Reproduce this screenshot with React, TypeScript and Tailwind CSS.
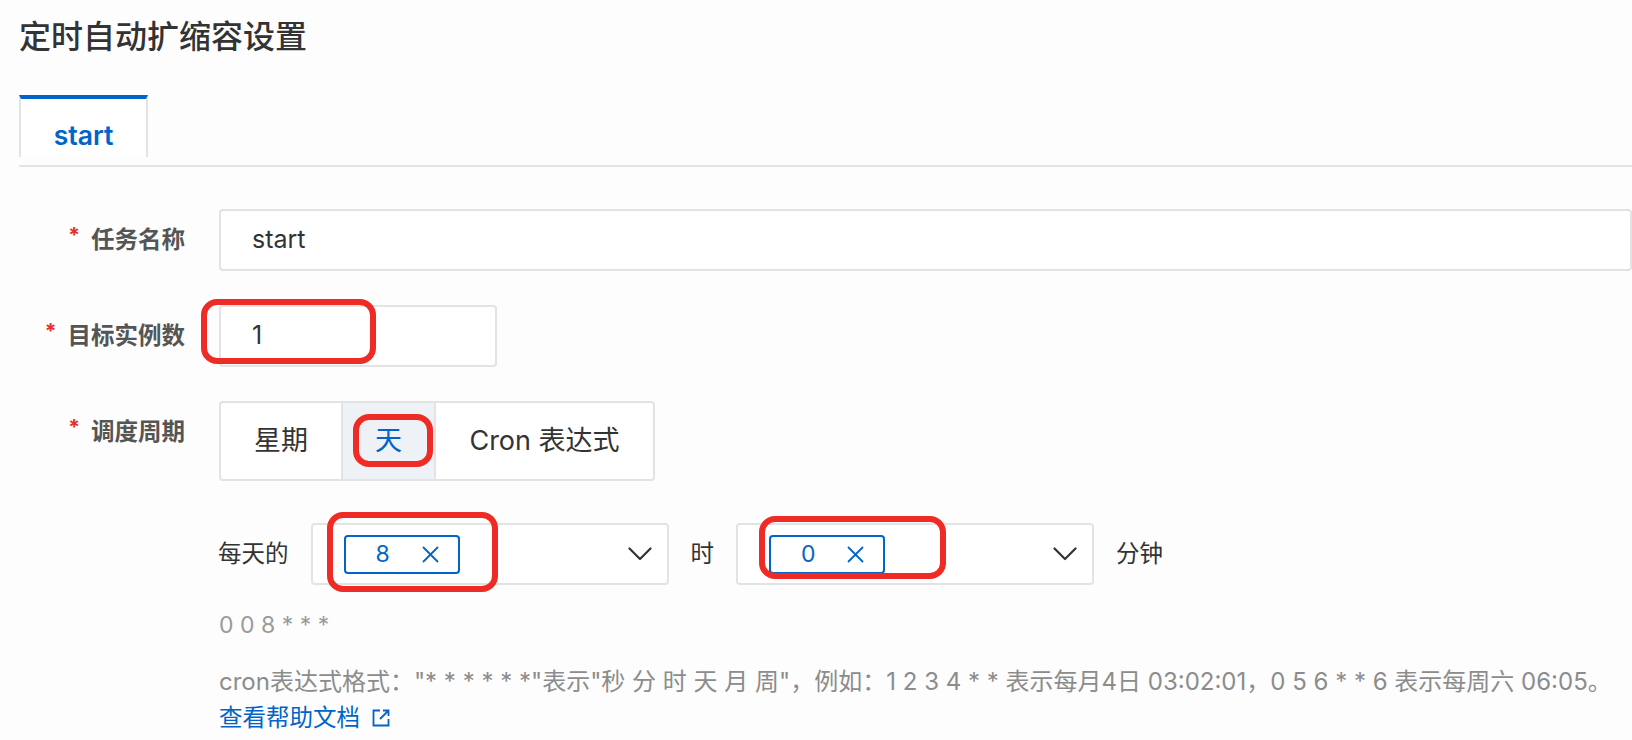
import React from "react";

const FONT = '"Inter", "Noto Sans CJK SC", sans-serif';

const HELP =
  'cron表达式格式："* * * * * *"表示"秒 分 时 天 月 周"，例如：1 2 3 4 * * 表示每月4日 03:02:01，0 5 6 * * 6 表示每周六 06:05。';

function Mark({ className }: { className: string }) {
  // red annotation box drawn over the screenshot
  return (
    <span
      className={`pointer-events-none absolute rounded-[16px] border-[6px] border-[#ee2b24] ${className}`}
    />
  );
}

function Label({ text }: { text: string }) {
  return (
    <div className="flex h-[62px] w-[166px] shrink-0 items-center justify-end text-[23.5px] font-semibold text-[#555]">
      <span className="mr-[11px] -mt-[8px] text-[21px] font-bold text-[#e62e2e]">*</span>
      {text}
    </div>
  );
}

function Chevron() {
  return (
    <svg width="24" height="14" viewBox="0 0 24 14" fill="none">
      <path d="M1.5 1.5L12 12L22.5 1.5" stroke="#333" strokeWidth="2.2" strokeLinecap="round" strokeLinejoin="round" />
    </svg>
  );
}

function Tag({ value }: { value: string }) {
  return (
    <span className="flex h-[39px] w-[116px] items-center rounded-[4px] border-2 border-[#0064c8] pl-[30px] text-[23px] text-[#0064c8]">
      <span className="w-[14px]">{value}</span>
      <svg className="ml-[32px]" width="17" height="17" viewBox="0 0 17 17" fill="none">
        <path d="M1.5 1.5L15.5 15.5M15.5 1.5L1.5 15.5" stroke="#0064c8" strokeWidth="1.8" strokeLinecap="round" />
      </svg>
    </span>
  );
}

function Select({ value, mark }: { value: string; mark: string }) {
  return (
    <div className="relative flex h-[62px] w-[358px] items-center justify-between rounded-[4px] border-2 border-[#e3e3e3] bg-white pl-[31px] pr-[15px]">
      <Tag value={value} />
      <Chevron />
      <Mark className={mark} />
    </div>
  );
}

export default function App() {
  return (
    <div className="h-[740px] w-[1632px] overflow-hidden bg-[#fdfdfd] pl-[19px]" style={{ fontFamily: FONT }}>
      <h1 className="pt-[15px] text-[32px] font-medium leading-[44px] text-[#333]">定时自动扩缩容设置</h1>

      <div className="mt-[36px] flex">
        <div className="h-[62px] w-[129px] border-x-2 border-t-4 border-x-[#e3e3e3] border-t-[#0064c8] bg-white pt-[21px] text-center text-[26.5px] font-semibold leading-[30px] text-[#0064c8]">
          start
        </div>
      </div>
      <div className="mt-[8px] h-[2px] bg-[#e3e3e3]" />

      <div className="mt-[42px] flex flex-col gap-[34px]">
        <div className="flex">
          <Label text="任务名称" />
          <div className="ml-[34px] flex h-[62px] w-[1500px] items-center rounded-[4px] border-2 border-[#e3e3e3] bg-white pl-[31px] text-[25px] text-[#333]">
            start
          </div>
        </div>

        <div className="flex">
          <Label text="目标实例数" />
          <div className="relative ml-[34px] flex h-[62px] w-[278px] items-center rounded-[4px] border-2 border-[#e3e3e3] bg-white pl-[31px] text-[25px] text-[#333]">
            1
            <Mark className="-left-[20px] -top-[8px] h-[65px] w-[175px]" />
          </div>
        </div>

        <div className="flex items-start">
          <Label text="调度周期" />
          <div className="ml-[34px] flex h-[80px] overflow-visible rounded-[4px] border-2 border-[#e3e3e3] bg-white text-[27px] text-[#333]">
            <div className="flex w-[120px] items-center justify-center">星期</div>
            <div className="relative flex w-[95px] items-center justify-center border-x-2 border-[#e3e3e3] bg-[#eef2f7] text-[#0064c8]">
              天
              <Mark className="left-[10px] top-[11px] h-[53px] w-[80px]" />
            </div>
            <div className="flex w-[217px] items-center justify-center">Cron 表达式</div>
          </div>
        </div>
      </div>

      <div className="ml-[199px] mt-[42px] flex items-center text-[23.5px] text-[#333]">
        <span>每天的</span>
        <div className="ml-[22px]">
          <Select value="8" mark="left-[14px] -top-[13px] h-[80px] w-[171px]" />
        </div>
        <span className="mx-[22px]">时</span>
        <Select value="0" mark="left-[21px] -top-[9px] h-[63px] w-[187px]" />
        <span className="ml-[22px]">分钟</span>
      </div>

      <div className="ml-[200px] mt-[25px] text-[23px] leading-[30px] text-[#9a9a9a]">0 0 8 * * *</div>
      <div className="ml-[200px] mt-[24px] whitespace-nowrap text-[24px] leading-[36px] text-[#8c8c8c]">{HELP}</div>
      <div className="ml-[200px] flex items-center text-[23.5px] leading-[36px] text-[#0064c8]">
        查看帮助文档
        <svg className="ml-[12px]" width="18" height="18" viewBox="0 0 18 18" fill="none">
          <path d="M8 1.5H1.5v15h15V10" stroke="#0064c8" strokeWidth="1.8" />
          <path d="M8 10L16 2M11 1.5h5.5V7" stroke="#0064c8" strokeWidth="1.8" />
        </svg>
      </div>
    </div>
  );
}
